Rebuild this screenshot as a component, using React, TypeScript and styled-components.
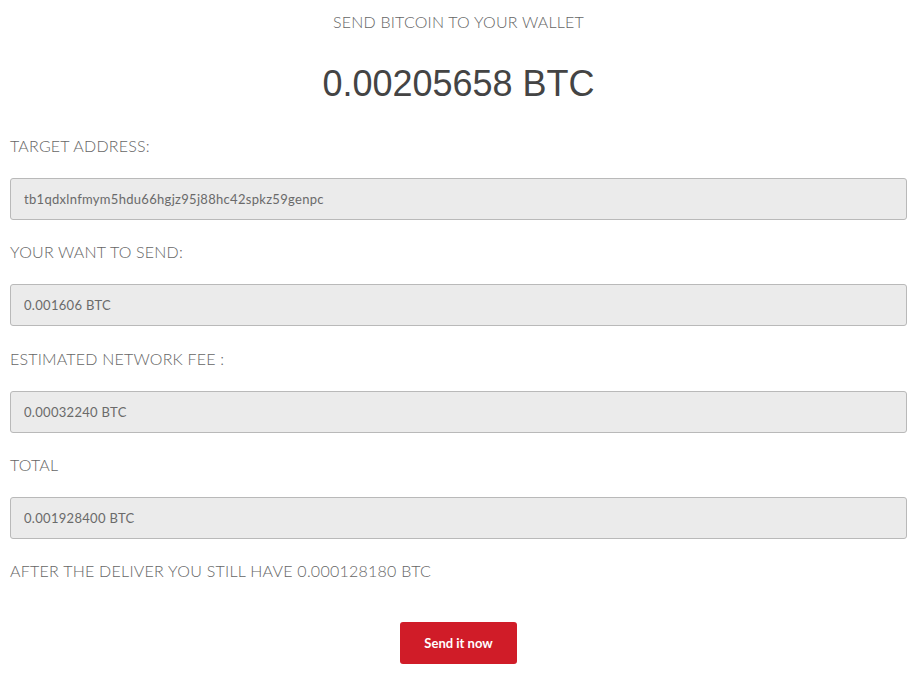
import React from "react";
import styled, { createGlobalStyle } from "styled-components";

const Global = createGlobalStyle`
  html, body { margin: 0; padding: 0; background: #ffffff; }
  body { font-family: "Lato", "Open Sans", sans-serif; }
`;

const Page = styled.div`
  width: 918px;
  box-sizing: border-box;
  padding: 11px 11px 0 10px;
  display: flex;
  flex-direction: column;
`;

const Subtitle = styled.h2`
  margin: 0;
  text-align: center;
  font-weight: 300;
  font-size: 16px;
  line-height: 22px;
  letter-spacing: 0.2px;
  color: #666;
`;

const Amount = styled.h1`
  margin: 29px 0 0 0;
  text-align: center;
  font-family: "Liberation Sans", Arial, sans-serif;
  font-weight: 400;
  font-size: 36px;
  line-height: 44px;
  color: #444;
`;

const Form = styled.div`
  margin-top: 29px;
  display: flex;
  flex-direction: column;
`;

const Label = styled.label`
  display: block;
  font-weight: 300;
  font-size: 16px;
  line-height: 22px;
  letter-spacing: 0.2px;
  color: #666;
  margin-bottom: 21px;
`;

const Field = styled.input`
  box-sizing: border-box;
  width: 100%;
  height: 42px;
  margin: 0 0 21.25px 0;
  padding: 0 13px;
  border: 1px solid #b9b9b9;
  border-radius: 3px;
  background: #ebebeb;
  font-family: "Lato", "Open Sans", sans-serif;
  font-size: 13px;
  letter-spacing: 0.3px;
  color: #6a6a6a;
  outline: none;
`;

const Note = styled.p`
  margin: 0;
  font-weight: 300;
  font-size: 16px;
  line-height: 22px;
  letter-spacing: 0.25px;
  color: #666;
`;

const Actions = styled.div`
  display: flex;
  justify-content: center;
  margin-top: 40px;
`;

const SendButton = styled.button`
  width: 117px;
  height: 42px;
  border: none;
  border-radius: 3px;
  background: #d01c28;
  color: #fff;
  font-family: "Lato", "Open Sans", sans-serif;
  font-weight: 700;
  font-size: 13px;
  cursor: pointer;
`;

const rows = [
  { label: "TARGET ADDRESS:", value: "tb1qdxlnfmym5hdu66hgjz95j88hc42spkz59genpc" },
  { label: "YOUR WANT TO SEND:", value: "0.001606 BTC" },
  { label: "ESTIMATED NETWORK FEE :", value: "0.00032240 BTC" },
  { label: "TOTAL", value: "0.001928400 BTC" },
];

export default function App() {
  return (
    <>
      <Global />
      <Page>
        <Subtitle>SEND BITCOIN TO YOUR WALLET</Subtitle>
        <Amount>0.00205658 BTC</Amount>
        <Form>
          {rows.map((r) => (
            <React.Fragment key={r.label}>
              <Label>{r.label}</Label>
              <Field readOnly value={r.value} />
            </React.Fragment>
          ))}
          <Note>AFTER THE DELIVER YOU STILL HAVE 0.000128180 BTC</Note>
        </Form>
        <Actions>
          <SendButton>Send it now</SendButton>
        </Actions>
      </Page>
    </>
  );
}
